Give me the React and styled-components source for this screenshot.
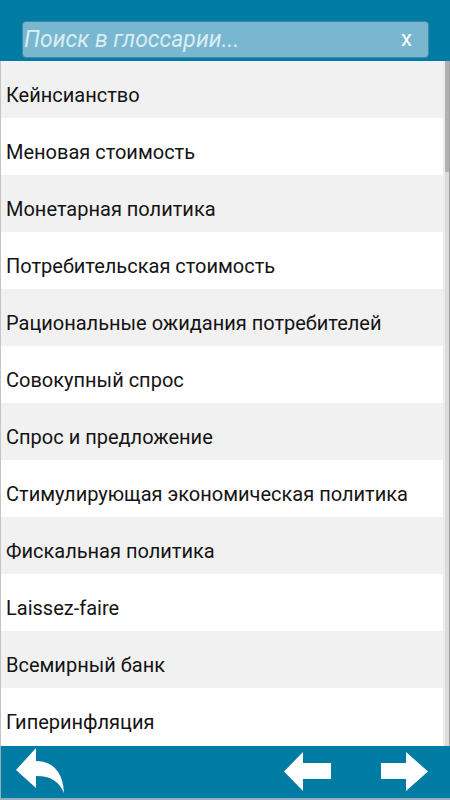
import React from 'react';
import styled, { createGlobalStyle } from 'styled-components';

const GlobalStyle = createGlobalStyle`
  html, body {
    margin: 0;
    padding: 0;
    height: 100%;
    overflow: hidden;
  }
  #root {
    height: 100%;
  }
`;

const terms = [
  'Кейнсианство',
  'Меновая стоимость',
  'Монетарная политика',
  'Потребительская стоимость',
  'Рациональные ожидания потребителей',
  'Совокупный спрос',
  'Спрос и предложение',
  'Стимулирующая экономическая политика',
  'Фискальная политика',
  'Laissez-faire',
  'Всемирный банк',
  'Гиперинфляция',
];

const Screen = styled.div`
  display: flex;
  flex-direction: column;
  height: 100vh;
  font-family: Roboto, "Liberation Sans", sans-serif;
  background: #ffffff;
`;

const Header = styled.header`
  flex: 0 0 61px;
  box-sizing: border-box;
  background: #007ba3;
  padding: 21px 21px 3px 22px;
`;

const SearchBox = styled.div`
  display: flex;
  align-items: center;
  height: 37px;
  box-sizing: border-box;
  background: #78b7cf;
  border: 1px solid #3e89a6;
  border-radius: 4px;
  padding: 0 16px 0 1px;
`;

const SearchInput = styled.input`
  flex: 1;
  min-width: 0;
  border: none;
  outline: none;
  background: transparent;
  font-family: Roboto, "Liberation Sans", sans-serif;
  font-size: 23px;
  font-style: italic;
  color: #ffffff;
  padding: 0;
  &::placeholder {
    color: #d9edf5;
    opacity: 1;
  }
`;

const ClearButton = styled.button`
  border: none;
  background: none;
  padding: 0;
  color: #ffffff;
  font-family: Roboto, "Liberation Sans", sans-serif;
  font-size: 22px;
  line-height: 1;
  margin-top: -2px;
`;

const ListArea = styled.div`
  flex: 1;
  display: flex;
  min-height: 0;
  border-left: 1px solid #c4c4c4;
`;

const List = styled.ul`
  flex: 1;
  margin: 0;
  padding: 0;
  list-style: none;
  overflow: hidden;
`;

const Row = styled.li`
  height: 57px;
  display: flex;
  align-items: center;
  padding: 10px 0 0 5px;
  box-sizing: border-box;
  font-size: 20px;
  color: #141414;
  background: ${p => (p.$shade ? '#f1f1f1' : '#ffffff')};
  white-space: nowrap;
`;

const ScrollTrack = styled.div`
  flex: 0 0 7px;
  box-sizing: border-box;
  background: #dcdcdc;
  border-left: 2px solid #ececec;
  border-right: 1px solid #a0a0a0;
`;

const ScrollThumb = styled.div`
  height: 111px;
  background: #b1b1b1;
`;

const Footer = styled.footer`
  flex: 0 0 54px;
  box-sizing: border-box;
  background: #007ba3;
  border-bottom: 2px solid #8fb0bd;
  border-left: 1px solid #8fb0bd;
  display: flex;
  align-items: center;
  padding: 0 22px 0 13px;
`;

const IconButton = styled.button`
  border: none;
  background: none;
  padding: 0;
  display: flex;
  margin-left: ${p => p.$gap || 0}px;
`;

const Spacer = styled.div`
  flex: 1;
`;

const ReplyIcon = () => (
  <svg width="52" height="50" viewBox="0 0 52 50">
    <path
      d="M2 23 L22 1 L22 14 C38 14 49 24 50 46 C45 35 38 29 22 29 L22 41 Z"
      fill="#ffffff"
    />
  </svg>
);

const ArrowLeft = () => (
  <svg width="47" height="40" viewBox="0 0 47 40">
    <path d="M0 19.5 L19 0 L19 11 L47 11 L47 27 L19 27 L19 39 Z" fill="#ffffff" />
  </svg>
);

const ArrowRight = () => (
  <svg width="47" height="40" viewBox="0 0 47 40">
    <path d="M47 19.5 L25 0 L25 11 L0 11 L0 27 L25 27 L25 39 Z" fill="#ffffff" />
  </svg>
);

export default function App() {
  return (
    <Screen>
      <GlobalStyle />
      <Header>
        <SearchBox>
          <SearchInput placeholder="Поиск в глоссарии..." />
          <ClearButton>x</ClearButton>
        </SearchBox>
      </Header>
      <ListArea>
        <List>
          {terms.map((t, i) => (
            <Row key={t} $shade={i % 2 === 0}>{t}</Row>
          ))}
        </List>
        <ScrollTrack>
          <ScrollThumb />
        </ScrollTrack>
      </ListArea>
      <Footer>
        <IconButton><ReplyIcon /></IconButton>
        <Spacer />
        <IconButton><ArrowLeft /></IconButton>
        <IconButton $gap={50}><ArrowRight /></IconButton>
      </Footer>
    </Screen>
  );
}
